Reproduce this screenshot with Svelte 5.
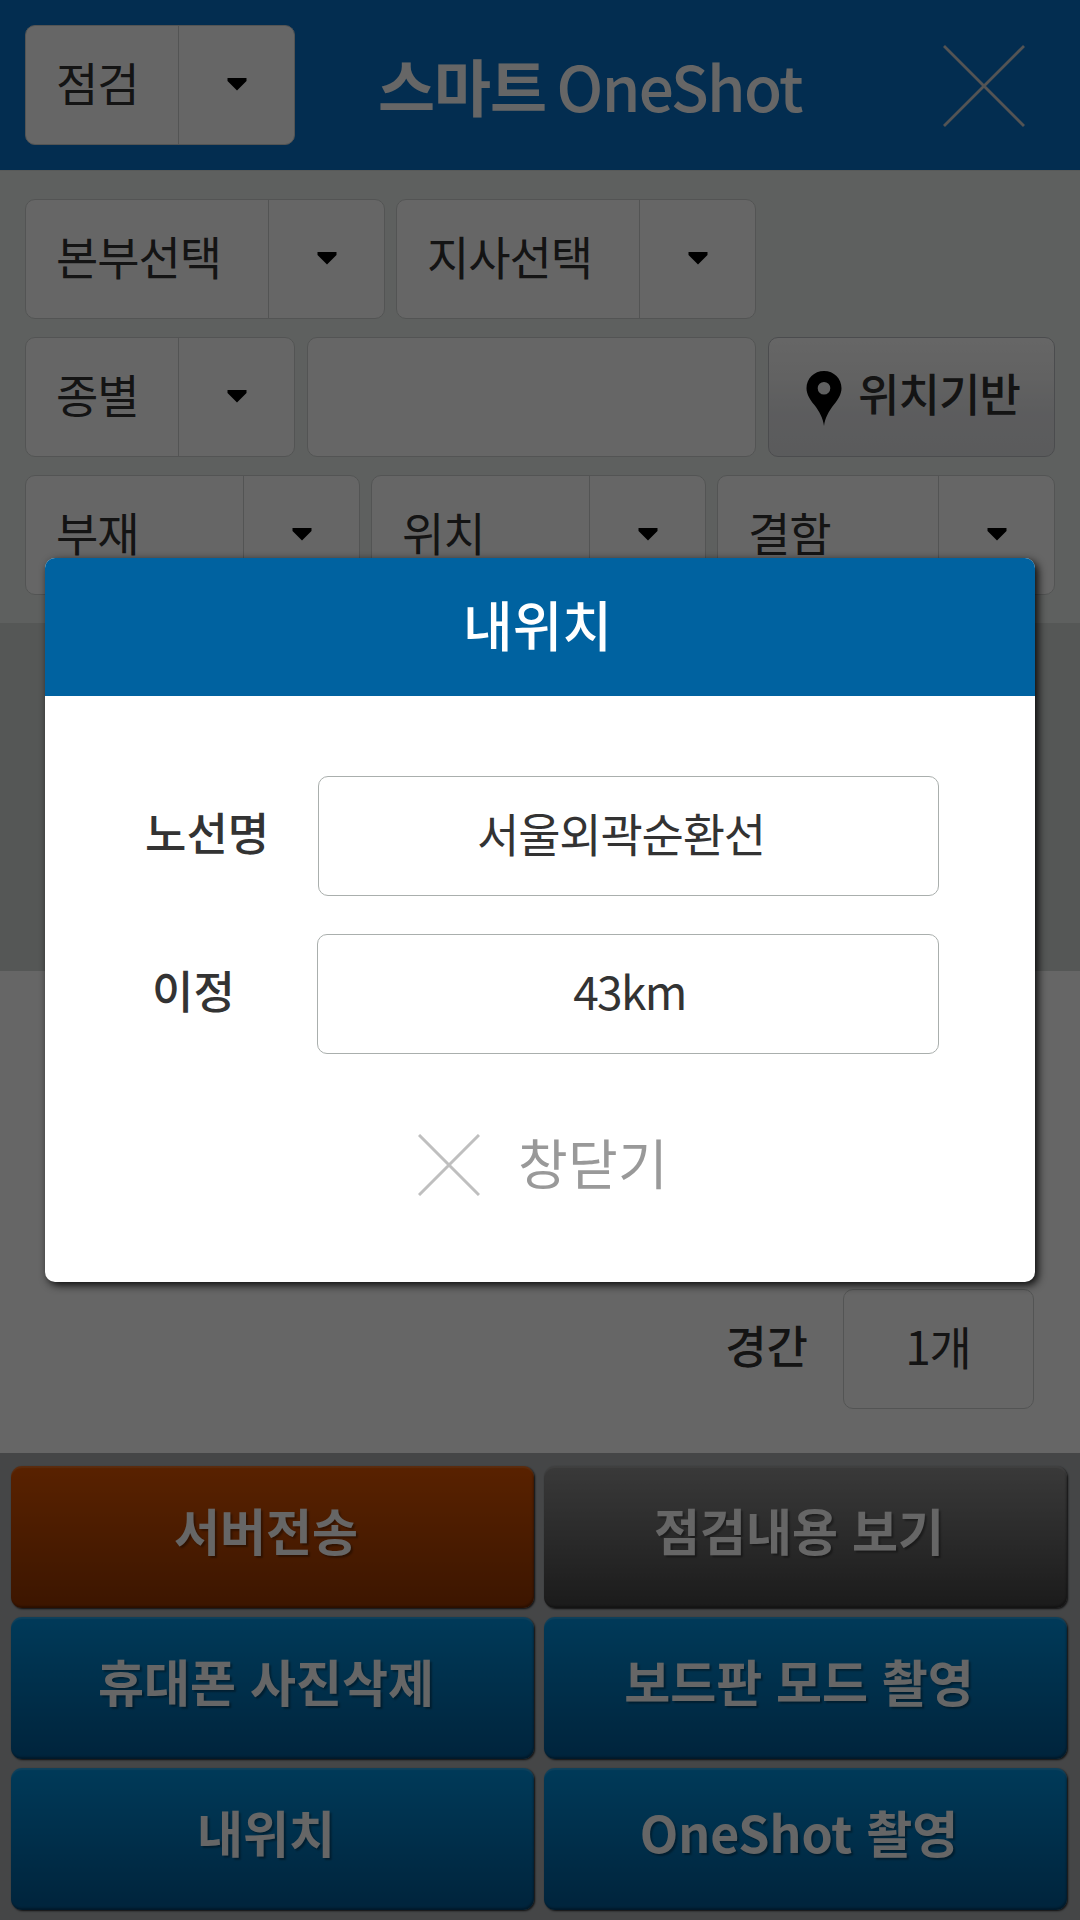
<script>
  const filters = [
    [{ label: '본부선택', cls: 'w360' }, { label: '지사선택', cls: 'w360' }],
    [{ label: '종별', cls: 'w270' }, { input: true }, { locate: true }],
    [{ label: '부재', cls: 'w335' }, { label: '위치', cls: 'w335' }, { label: '결함', cls: 'w338' }]
  ];
  const actions = [
    { label: '서버전송', tone: 'orange' },
    { label: '점검내용 보기', tone: 'gray' },
    { label: '휴대폰 사진삭제', tone: 'blue' },
    { label: '보드판 모드 촬영', tone: 'blue' },
    { label: '내위치', tone: 'blue' },
    { label: 'OneShot 촬영', tone: 'blue' }
  ];
</script>

{#snippet select(label, cls)}
  <div class="select {cls}">
    <span class="select-label">{label}</span>
    <span class="select-arrow">
      <svg width="20" height="13" viewBox="0 0 20 13"><path d="M.5 0H19.500V3L10 12.500L.5 3Z" fill="#000" /></svg>
    </span>
  </div>
{/snippet}

<div class="screen">
  <header class="topbar">
    {@render select('점검', 'w270')}
    <h1><span class="ko">스마트</span><span class="en">OneShot</span></h1>
    <svg class="exit" width="82" height="82" viewBox="0 0 82 82">
      <path d="M1 1L81 81M81 1L1 81" stroke="#d2d2d2" stroke-width="2.8" />
    </svg>
  </header>

  <section class="filters">
    {#each filters as row}
      <div class="row">
        {#each row as item}
          {#if item.input}
            <div class="field"></div>
          {:else if item.locate}
            <button class="locate">
              <svg width="36" height="55" viewBox="0 0 36 55">
                <path fill-rule="evenodd" fill="#000" d="M18 0C28 0 35.5 7.6 35.5 17.2C35.5 23 32 28.500 28 33.500C22.500 40.500 19 47 18 55C17 47 13.500 40.500 8 33.500C4 28.500 .5 23 .5 17.2C.5 7.6 8 0 18 0ZM18 11A6.300 6.300 0 1 0 18 23.600A6.300 6.300 0 1 0 18 11Z" />
              </svg>
              <span>위치기반</span>
            </button>
          {:else}
            {@render select(item.label, item.cls)}
          {/if}
        {/each}
      </div>
    {/each}
  </section>

  <section class="preview"></section>

  <section class="span-row">
    <span class="label">경간</span>
    <div class="count">1개</div>
  </section>

  <footer class="actions">
    {#each actions as a}
      <button class="action {a.tone}">{a.label}</button>
    {/each}
  </footer>

  <div class="dim">
    <div class="modal">
      <h2>내위치</h2>
      <div class="modal-body">
        <div class="pair">
          <span class="label">노선명</span>
          <div class="value first">서울외곽순환선</div>
        </div>
        <div class="pair">
          <span class="label short">이정</span>
          <div class="value second">43km</div>
        </div>
        <button class="close">
          <svg width="62" height="62" viewBox="0 0 62 62">
            <path d="M1 1L61 61M61 1L1 61" stroke="#bfbfbf" stroke-width="3" />
          </svg>
          <span>창닫기</span>
        </button>
      </div>
    </div>
  </div>
</div>

<style>
  :global(body) {
    margin: 0;
  }
  .screen {
    position: relative;
    display: flex;
    flex-direction: column;
    width: 1080px;
    height: 1920px;
    overflow: hidden;
    background: #fff;
    color: #333;
    font-family: 'Noto Sans CJK KR', 'Noto Sans', sans-serif;
    font-size: 45px;
    line-height: 60px;
  }
  .screen :global(*) {
    box-sizing: border-box;
  }
  button {
    margin: 0;
    padding: 0;
    border: 0;
    background: none;
    color: inherit;
    font: inherit;
  }
  svg {
    display: block;
    flex: none;
  }
  .topbar {
    display: flex;
    align-items: flex-start;
    height: 170px;
    padding: 25px 55px 0 25px;
    background: #0871c8;
  }
  .select {
    display: flex;
    flex: none;
    height: 120px;
    border: 1px solid #cfd2d1;
    border-radius: 10px;
    background: #fff;
  }
  .w270 {
    width: 270px;
  }
  .w335 {
    width: 335px;
  }
  .w338 {
    width: 338px;
  }
  .w360 {
    width: 360px;
  }
  .select-label {
    flex: 1;
    padding: 25px 0 0 30px;
    font-size: 46px;
    letter-spacing: -1.1px;
    white-space: nowrap;
  }
  .select-arrow {
    display: flex;
    justify-content: center;
    width: 116px;
    padding-top: 52px;
    border-left: 1px solid #cfd2d1;
  }
  h1 {
    display: flex;
    margin: 15px 0 0 83px;
    width: 424px;
    color: #fff;
    font-size: 62px;
    font-weight: 700;
    line-height: 90px;
    white-space: nowrap;
  }
  .ko {
    width: 181px;
    letter-spacing: -1px;
  }
  .en {
    font-weight: 500;
    letter-spacing: -1.6px;
  }
  .exit {
    margin: 20px 0 0 auto;
  }
  .filters {
    display: flex;
    flex-direction: column;
    gap: 18px;
    height: 453px;
    padding: 28px 25px 0;
    border-top: 1px solid #dde0df;
    background: #ebf0ee;
  }
  .row {
    display: flex;
    gap: 11px;
  }
  .field {
    width: 449px;
    height: 120px;
    margin: 0 1px;
    border: 1px solid #cfd2d1;
    border-radius: 10px;
    background: #fff;
  }
  .locate {
    display: flex;
    width: 287px;
    height: 120px;
    padding: 33px 0 0 37px;
    border: 1px solid #bcbec3;
    border-radius: 10px;
    background: linear-gradient(#fff, #f6f6f6 30%, #e6e7ea 65%, #e2e3e6);
    font-weight: 500;
    letter-spacing: -0.9px;
  }
  .locate span {
    margin: -8px 0 0 16px;
    white-space: nowrap;
  }
  .preview {
    height: 348px;
    background: #d5dad7;
  }
  .span-row {
    display: flex;
    align-items: flex-start;
    justify-content: flex-end;
    height: 482px;
    padding: 318px 46px 0 0;
  }
  .span-row .label {
    padding: 26px 35px 0 0;
  }
  .label {
    font-weight: 500;
    white-space: nowrap;
  }
  .count {
    width: 191px;
    height: 120px;
    padding: 25px 1px 0 0;
    border: 1px solid #cfd2d1;
    border-radius: 10px;
    font-size: 46px;
    letter-spacing: -1.2px;
    text-align: center;
  }
  .actions {
    display: grid;
    grid-template-columns: 523px 523px;
    grid-auto-rows: 142px;
    gap: 9px 10px;
    height: 467px;
    padding: 13px 11px 0;
    background: #acafb2;
  }
  .action {
    padding: 0 13px 16px 0;
    border-radius: 11px;
    color: #fff;
    font-size: 50px;
    font-weight: 700;
    word-spacing: 2.5px;
    text-shadow: 2px 2px 2px rgba(0, 0, 0, 0.35);
    box-shadow:
      1px 1px 2px rgba(0, 0, 0, 0.8),
      inset 0 2px 1px rgba(255, 255, 255, 0.15),
      inset -1px -2px 2px rgba(0, 0, 0, 0.3);
  }
  .orange {
    background: linear-gradient(#de5500, #973700);
  }
  .gray {
    background: linear-gradient(#909090, #444);
  }
  .blue {
    background: linear-gradient(#0091de, #005a96);
  }
  .dim {
    position: absolute;
    inset: 0;
    display: flex;
    flex-direction: column;
    align-items: center;
    padding-top: 558px;
    background: rgba(0, 0, 0, 0.6);
  }
  .modal {
    width: 990px;
    height: 724px;
    border-radius: 10px;
    background: #fff;
    box-shadow: 3px 3px 8px rgba(0, 0, 0, 0.9);
  }
  h2 {
    margin: 0;
    height: 138px;
    padding: 28px 5px 0 0;
    border-radius: 10px 10px 0 0;
    background: #0062a0;
    color: #fff;
    font-size: 54px;
    font-weight: 500;
    line-height: 76px;
    text-align: center;
  }
  .modal-body {
    display: flex;
    flex-direction: column;
    gap: 38px;
    padding: 80px 96px 0 100px;
  }
  .pair {
    display: flex;
    justify-content: space-between;
  }
  .pair .label {
    padding-top: 26px;
  }
  .pair .short {
    padding-left: 7px;
  }
  .value {
    width: 622px;
    height: 120px;
    padding-top: 25px;
    border: 1px solid #aaafad;
    border-radius: 10px;
    font-size: 46px;
    letter-spacing: -1.2px;
    text-align: center;
  }
  .value.first {
    width: 621px;
    padding-right: 15px;
  }
  .value.second {
    padding-left: 3px;
    letter-spacing: -1.6px;
  }
  .close {
    display: flex;
    align-items: center;
    gap: 38px;
    margin: 42px 0 0 273px;
    color: #999;
    font-size: 54px;
    letter-spacing: 0.3px;
  }
  .close span {
    margin-top: -6px;
  }
</style>
